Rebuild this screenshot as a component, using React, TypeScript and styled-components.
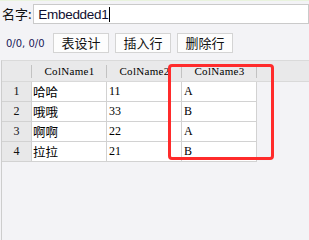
import styled, { createGlobalStyle } from 'styled-components';

const GlobalStyle = createGlobalStyle`
  html, body {
    margin: 0;
    padding: 0;
    background: #f3f3f6;
  }
  * {
    box-sizing: border-box;
  }
`;

const columns = ['ColName1', 'ColName2', 'ColName3'];

const rows = [
  { name: '哈哈', value: '11', tag: 'A' },
  { name: '哦哦', value: '33', tag: 'B' },
  { name: '啊啊', value: '22', tag: 'A' },
  { name: '拉拉', value: '21', tag: 'B' },
];

const App = () => {
  return (
    <Page>
      <GlobalStyle />
      <NameRow>
        <Label>名字:</Label>
        <NameField>
          Embedded1
          <Caret />
        </NameField>
      </NameRow>
      <Toolbar>
        <Counter>0/0, 0/0</Counter>
        <ToolButton>表设计</ToolButton>
        <ToolButton>插入行</ToolButton>
        <ToolButton>删除行</ToolButton>
      </Toolbar>
      <GridArea>
        <HeaderRow>
          <HeaderCell />
          {columns.map((col) => (
            <HeaderCell key={col}>{col}</HeaderCell>
          ))}
        </HeaderRow>
        {rows.map((row, index) => (
          <DataRow key={index}>
            <RowNumber>{index + 1}</RowNumber>
            <Cell $cjk>{row.name}</Cell>
            <Cell>{row.value}</Cell>
            <Cell>{row.tag}</Cell>
          </DataRow>
        ))}
      </GridArea>
      <Highlight />
    </Page>
  );
};

export default App;

const Page = styled.div`
  position: relative;
  width: 309px;
  height: 240px;
  overflow: hidden;
  display: flex;
  flex-direction: column;
  border-top: 1px solid #e9f3de;
  font-family: 'Noto Sans CJK SC', 'Liberation Sans', sans-serif;
  color: #111;
`;

const NameRow = styled.div`
  display: flex;
  align-items: center;
  padding: 3px 0 0 2px;
`;

const Label = styled.span`
  width: 33px;
  font-size: 13px;
  line-height: 20px;
`;

const NameField = styled.div`
  display: flex;
  align-items: center;
  width: 290px;
  height: 20px;
  padding-left: 4px;
  background: #fff;
  border: 1px solid #cacaca;
  font-family: 'Liberation Sans', Arial, sans-serif;
  font-size: 13.5px;
  letter-spacing: -0.3px;
  color: #101030;
`;

const Caret = styled.span`
  display: inline-block;
  width: 1px;
  height: 15px;
  margin-left: 1px;
  background: #000;
`;

const Toolbar = styled.div`
  display: flex;
  align-items: center;
  gap: 6px;
  margin-top: 9px;
  padding-left: 6px;
`;

const Counter = styled.span`
  width: 41px;
  font-family: 'DejaVu Sans', sans-serif;
  font-size: 10px;
  color: #181858;
`;

const ToolButton = styled.button`
  width: 56px;
  height: 20px;
  padding: 0;
  background: #fdfdfd;
  border: 1px solid #d4d4d4;
  border-radius: 0;
  font-family: 'Noto Sans CJK SC', sans-serif;
  font-size: 13px;
  line-height: 18px;
  color: #111;
`;

const GridArea = styled.div`
  flex: 1;
  margin: 7px 0 0 1px;
  border-left: 1px solid #cdcdcd;
  border-top: 1px solid #dadada;
`;

const gridColumns = `
  display: grid;
  grid-template-columns: 30px 75px 75px 75px;
`;

const HeaderRow = styled.div`
  ${gridColumns}
  height: 21px;
  background: #e9e9ea;
  border-bottom: 1px solid #d9d9d9;
`;

const HeaderCell = styled.div`
  position: relative;
  display: flex;
  align-items: center;
  justify-content: center;
  font-family: 'Liberation Serif', serif;
  font-size: 11px;
  letter-spacing: 0.3px;
  color: #000;

  &::after {
    content: '';
    position: absolute;
    right: 0;
    top: 4px;
    bottom: 3px;
    width: 1px;
    background: #c2c2c2;
  }
`;

const DataRow = styled.div`
  ${gridColumns}
  height: 20px;
`;

const RowNumber = styled.div`
  display: flex;
  align-items: center;
  justify-content: center;
  background: #e8e8e9;
  border-right: 1px solid #d2d2d2;
  border-bottom: 1px solid #d2d2d2;
  font-family: 'Liberation Serif', serif;
  font-size: 12px;
`;

const Cell = styled.div<{ $cjk?: boolean }>`
  display: flex;
  align-items: center;
  padding-left: ${({ $cjk }) => ($cjk ? '1px' : '2px')};
  background: #fff;
  border-right: 1px solid #d2d2d2;
  border-bottom: 1px solid #d2d2d2;
  font-family: ${({ $cjk }) =>
    $cjk ? "'Noto Sans CJK SC', sans-serif" : "'Liberation Serif', serif"};
  font-size: ${({ $cjk }) => ($cjk ? '12.5px' : '12px')};
  color: #000;
`;

const Highlight = styled.div`
  position: absolute;
  left: 168px;
  top: 63px;
  width: 106px;
  height: 96px;
  border: 3px solid #ff2b2b;
  border-radius: 4px;
  pointer-events: none;
`;
